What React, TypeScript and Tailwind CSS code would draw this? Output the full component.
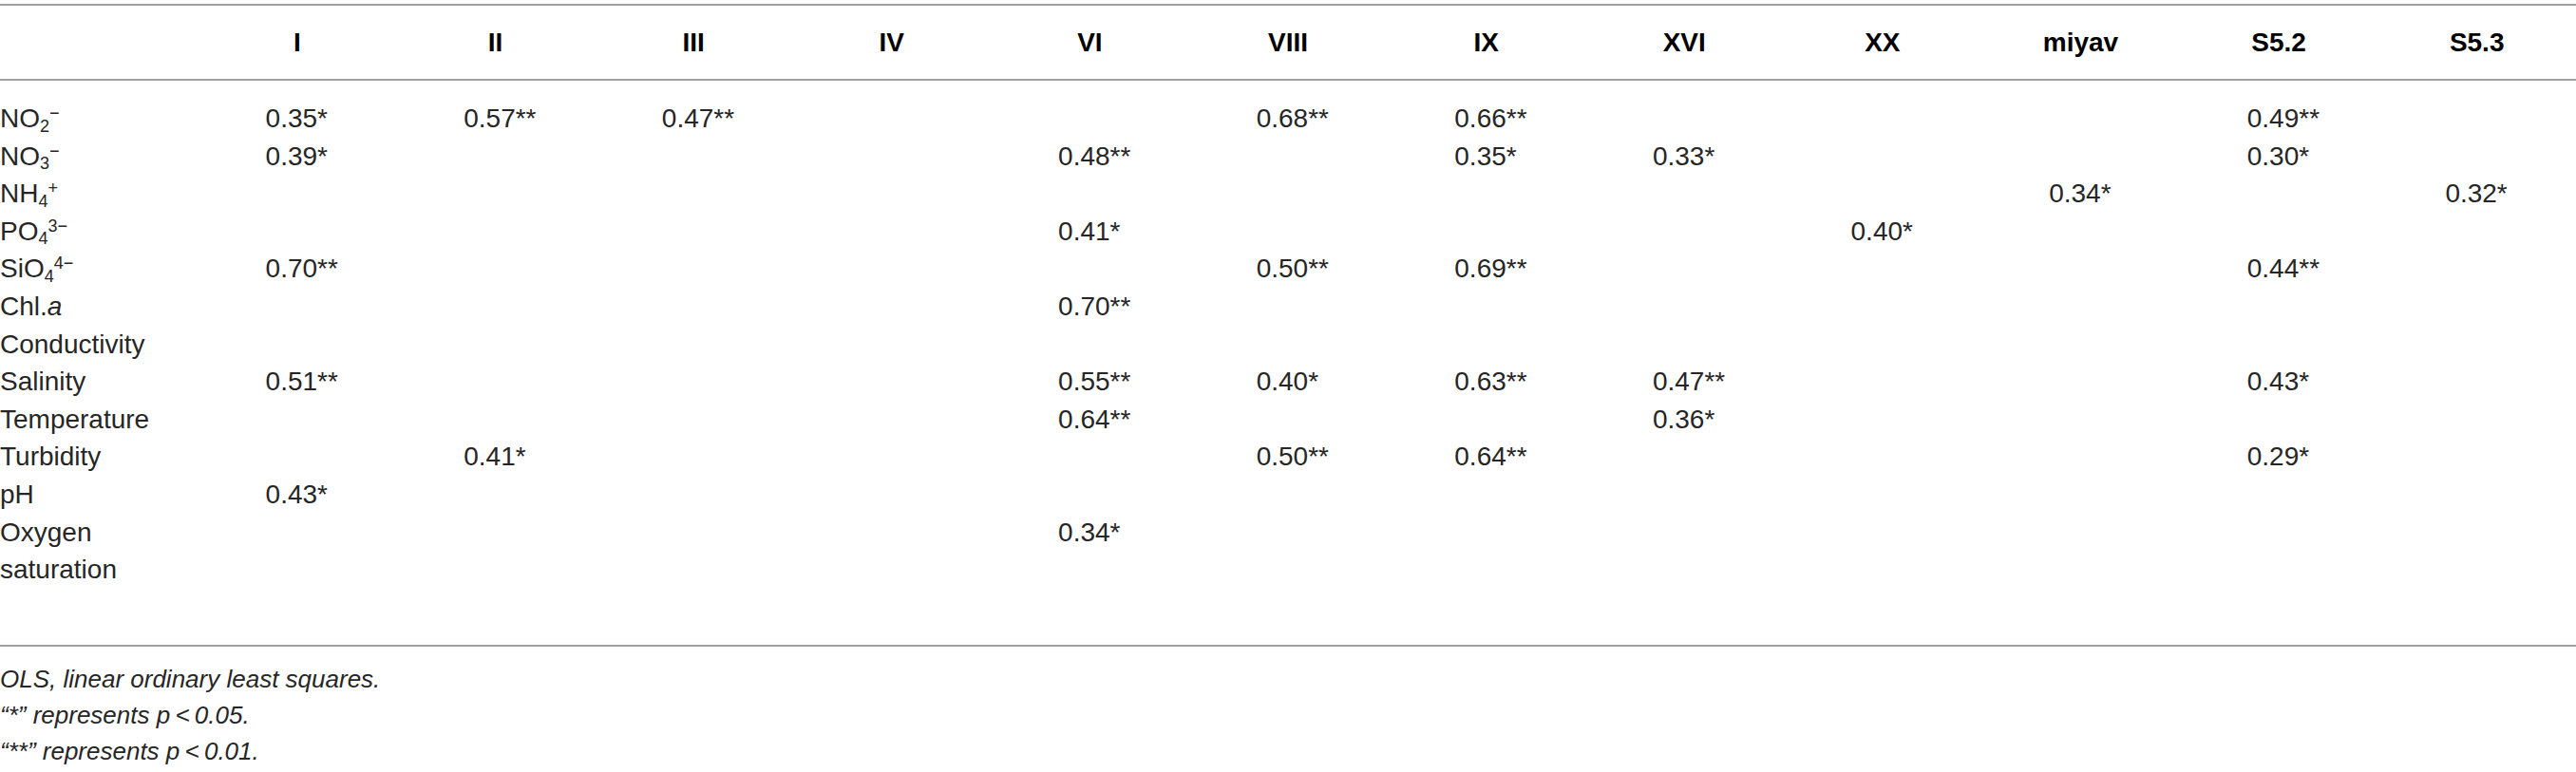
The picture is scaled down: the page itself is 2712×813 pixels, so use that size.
import React from "react";

type Row = { label: React.ReactNode; values: Record<string, string> };

const cols = ["I", "II", "III", "IV", "VI", "VIII", "IX", "XVI", "XX", "miyav", "S5.2", "S5.3"];

const rows: Row[] = [
  {
    label: (
      <>
        NO<sub className="text-[18px]">2</sub>
        <sup className="text-[18px]">−</sup>
      </>
    ),
    values: { I: "0.35*", II: "0.57**", III: "0.47**", VIII: "0.68**", IX: "0.66**", "S5.2": "0.49**" },
  },
  {
    label: (
      <>
        NO<sub className="text-[18px]">3</sub>
        <sup className="text-[18px]">−</sup>
      </>
    ),
    values: { I: "0.39*", VI: "0.48**", IX: "0.35*", XVI: "0.33*", "S5.2": "0.30*" },
  },
  {
    label: (
      <>
        NH<sub className="text-[18px]">4</sub>
        <sup className="text-[18px]">+</sup>
      </>
    ),
    values: { miyav: "0.34*", "S5.3": "0.32*" },
  },
  {
    label: (
      <>
        PO<sub className="text-[18px]">4</sub>
        <sup className="text-[18px]">3−</sup>
      </>
    ),
    values: { VI: "0.41*", XX: "0.40*" },
  },
  {
    label: (
      <>
        SiO<sub className="text-[18px]">4</sub>
        <sup className="text-[18px]">4−</sup>
      </>
    ),
    values: { I: "0.70**", VIII: "0.50**", IX: "0.69**", "S5.2": "0.44**" },
  },
  {
    label: (
      <>
        Chl.<i>a</i>
      </>
    ),
    values: { VI: "0.70**" },
  },
  { label: "Conductivity", values: {} },
  {
    label: "Salinity",
    values: { I: "0.51**", VI: "0.55**", VIII: "0.40*", IX: "0.63**", XVI: "0.47**", "S5.2": "0.43*" },
  },
  { label: "Temperature", values: { VI: "0.64**", XVI: "0.36*" } },
  { label: "Turbidity", values: { II: "0.41*", VIII: "0.50**", IX: "0.64**", "S5.2": "0.29*" } },
  { label: "pH", values: { I: "0.43*" } },
  { label: "Oxygen saturation", values: { VI: "0.34*" } },
];

export default function App() {
  return (
    <div
      className="w-[2712px] h-[813px] bg-white text-[#262626] overflow-hidden"
      style={{ fontFamily: '"Liberation Sans", Arial, sans-serif' }}
    >
      <div className="mt-[4px] border-t-2 border-[#a0a0a0]" />
      <div className="grid grid-cols-[repeat(13,minmax(0,1fr))] h-[79px] items-center border-b-2 border-[#a0a0a0]">
        <div />
        {cols.map((c) => (
          <div key={c} className="text-center text-[28px] font-bold text-black">
            {c}
          </div>
        ))}
      </div>
      <div className="pt-[20px] pb-[59px] border-b-2 border-[#a0a0a0]">
        {rows.map((r, i) => (
          <div key={i} className="grid grid-cols-[repeat(13,minmax(0,1fr))] text-[28px] leading-[39.6px]">
            <div className="pr-[30px]">{r.label}</div>
            {cols.map((c) => (
              <div key={c} className="pl-[71px] whitespace-nowrap">
                {r.values[c] ?? ""}
              </div>
            ))}
          </div>
        ))}
      </div>
      <div className="pt-[15px] text-[26px] leading-[38px] italic">
        <div>OLS, linear ordinary least squares.</div>
        <div>“*” represents p{"\u2009"}&lt;{"\u2009"}0.05.</div>
        <div>“**” represents p{"\u2009"}&lt;{"\u2009"}0.01.</div>
      </div>
    </div>
  );
}
